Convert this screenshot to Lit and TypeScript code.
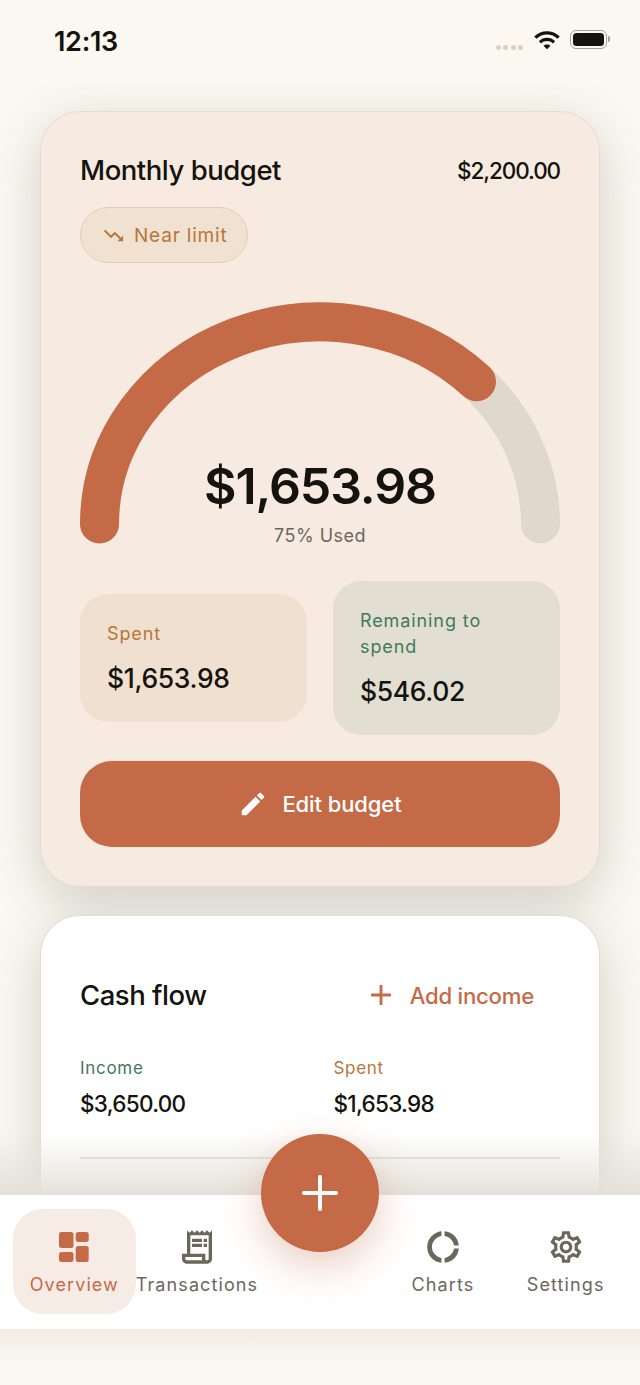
import { LitElement, html, css, svg } from "lit";
import { customElement } from "lit/decorators.js";

const icon = (d: string, size: number, cls = "") => html`<svg class=${cls} width=${size} height=${size} viewBox="0 0 24 24" fill="currentColor">${svg`<path d=${d}></path>`}</svg>`;

const I = {
  wifi: "M1 9l2 2c4.97-4.97 13.03-4.97 18 0l2-2C16.93 2.93 7.08 2.93 1 9zm8 8l3 3 3-3c-1.65-1.66-4.34-1.66-6 0zm-4-4l2 2c2.76-2.76 7.24-2.76 10 0l2-2C15.14 9.14 8.87 9.14 5 13z",
  trend: "M16 18l2.29-2.29-4.88-4.88-4 4L2 7.41 3.41 6l6 6 4-4 6.3 6.29L22 12v6z",
  edit: "M3 17.25V21h3.75L17.81 9.94l-3.75-3.75L3 17.25zM20.71 7.04c.39-.39.39-1.02 0-1.41l-2.34-2.34c-.39-.39-1.02-.39-1.41 0l-1.83 1.83 3.75 3.75 1.83-1.83z",
  receipt: "M19.5 3.5 18 2l-1.5 1.5L15 2l-1.5 1.5L12 2l-1.5 1.5L9 2 7.5 3.5 6 2v14H3v3c0 1.66 1.34 3 3 3h12c1.66 0 3-1.34 3-3V2l-1.5 1.5zM15 20H6c-.55 0-1-.45-1-1v-1h10v2zm4-1c0 .55-.45 1-1 1s-1-.45-1-1v-3H8V5h11v14zM9 7h6v2H9zM16 7h2v2h-2zM9 10h6v2H9zM16 10h2v2h-2z",
  donut: "M11 5.08V2c-5 .5-9 4.81-9 10s4 9.5 9 10v-3.08c-3-.48-6-3.4-6-6.92s3-6.44 6-6.92zM18.97 11H22c-.47-5-4-8.53-9-9v3.08C16 5.51 18.54 8 18.97 11zM13 18.92V22c5-.47 8.53-4 9-9h-3.03c-.43 3-2.97 5.49-5.97 5.92z",
  gear: "M19.43 12.98c.04-.32.07-.64.07-.98 0-.34-.03-.66-.07-.98l2.11-1.65c.19-.15.24-.42.12-.64l-2-3.46c-.09-.16-.26-.25-.44-.25-.06 0-.12.01-.17.03l-2.49 1c-.52-.4-1.08-.73-1.69-.98l-.38-2.65C14.46 2.18 14.25 2 14 2h-4c-.25 0-.46.18-.49.42l-.38 2.65c-.61.25-1.17.59-1.69.98l-2.49-1c-.06-.02-.12-.03-.18-.03-.17 0-.34.09-.43.25l-2 3.46c-.13.22-.07.49.12.64l2.11 1.65c-.04.32-.07.65-.07.98 0 .33.03.66.07.98l-2.11 1.65c-.19.15-.24.42-.12.64l2 3.46c.09.16.26.25.44.25.06 0 .12-.01.17-.03l2.49-1c.52.4 1.08.73 1.69.98l.38 2.65c.03.24.24.42.49.42h4c.25 0 .46-.18.49-.42l.38-2.65c.61-.25 1.17-.59 1.69-.98l2.49 1c.06.02.12.03.18.03.17 0 .34-.09.43-.25l2-3.46c.12-.22.07-.49-.12-.64l-2.11-1.65zm-1.98-1.71c.04.31.05.52.05.73 0 .21-.02.43-.05.73l-.14 1.13.89.7 1.08.84-.7 1.21-1.27-.51-1.04-.42-.9.68c-.43.32-.84.56-1.25.73l-1.06.43-.16 1.13-.2 1.35h-1.4l-.19-1.35-.16-1.13-1.06-.43c-.43-.18-.83-.41-1.23-.71l-.91-.7-1.06.43-1.27.51-.7-1.21 1.08-.84.89-.7-.14-1.13c-.03-.31-.05-.54-.05-.74s.02-.43.05-.73l.14-1.13-.89-.7-1.08-.84.7-1.21 1.27.51 1.04.42.9-.68c.43-.32.84-.56 1.25-.73l1.06-.43.16-1.13.2-1.35h1.39l.19 1.35.16 1.13 1.06.43c.43.18.83.41 1.23.71l.91.7 1.06-.43 1.27-.51.7 1.21-1.07.85-.89.7.14 1.13zM12 8c-2.21 0-4 1.79-4 4s1.79 4 4 4 4-1.79 4-4-1.79-4-4-4zm0 6c-1.1 0-2-.9-2-2s.9-2 2-2 2 .9 2 2-.9 2-2 2z",
};

@customElement("app-root")
export class AppRoot extends LitElement {
  static styles = css`
    :host { display: block; width: 640px; height: 1385px; overflow: hidden; background: #fbf8f1; color: #14130e; font-family: "Inter", "Liberation Sans", sans-serif; }
    * { box-sizing: border-box; }
    .screen { position: relative; height: 1385px; display: flex; flex-direction: column; }
    .status { height: 83px; flex: none; display: flex; justify-content: space-between; align-items: center; padding: 0 33px 4px 54px; }
    .time { font-size: 27px; font-weight: 600; letter-spacing: -.3px; padding-top: 3px; }
    .sys { display: flex; align-items: center; }
    .dots { display: flex; gap: 2.5px; margin: 15px 10px 0 0; }
    .dots i { width: 5px; height: 5px; border-radius: 50%; background: #e0cfc0; }
    .wifi { color: #14130e; margin-right: 9px; }
    .batt { width: 37px; height: 19px; border: 1.5px solid #a8a294; border-radius: 6px; padding: 2px; position: relative; }
    .batt b { display: block; height: 100%; background: #14130e; border-radius: 3.5px; }
    .batt::after { content: ""; position: absolute; right: -4px; top: 5px; width: 2px; height: 6px; background: #a8a294; border-radius: 0 2px 2px 0; }
    .scroll { flex: 1; min-height: 0; position: relative; overflow: hidden; padding: 28px 40px 0; display: flex; flex-direction: column; gap: 28px; }
    .card { flex: none; border-radius: 40px; border: 1.5px solid #e6ddd0; box-shadow: 0 14px 50px rgba(70,70,50,.22); padding: 39px; }
    .budget { background: #f7ebe1; height: 776px; display: flex; flex-direction: column; }
    .head { display: flex; justify-content: space-between; align-items: center; height: 38px; }
    h2 { margin: 0; font-size: 27.5px; font-weight: 500; line-height: 38px; letter-spacing: -.47px; }
    .limit { font-size: 22.5px; font-weight: 500; letter-spacing: -1.1px; }
    .badge { align-self: flex-start; display: flex; align-items: center; gap: 9px; height: 56px; margin-top: 18px; padding: 1px 20px 0 21px; border-radius: 28px; background: #f0e1d0; border: 1.5px solid #e0cfbb; color: #b8763a; font-size: 19px; letter-spacing: .8px; }
    .gauge { position: relative; height: 242px; margin-top: 39px; }
    .gauge svg { display: block; }
    .center { position: absolute; left: 0; right: 0; bottom: -5px; display: flex; flex-direction: column; align-items: center; }
    .amount { font-size: 50px; font-weight: 600; line-height: 60px; letter-spacing: -1.1px; }
    .used { font-size: 18px; letter-spacing: .5px; color: #6c675b; line-height: 26px; margin-top: 7px; }
    .tiles { display: flex; align-items: center; gap: 26px; margin-top: 37px; }
    .tile { flex: 1; border-radius: 28px; padding: 27px 27px 25px; }
    .tile.a { background: #f0e0cf; color: #b8763a; }
    .tile.b { background: #e2dfd2; color: #3f7a5c; }
    .tile span { display: block; font-size: 18px; line-height: 26px; letter-spacing: .9px; }
    .tile strong { display: block; font-size: 26.5px; font-weight: 500; color: #14130e; line-height: 38px; margin-top: 12px; letter-spacing: -.35px; }
    .btn { display: flex; align-items: center; justify-content: center; gap: 14px; height: 86px; margin-top: 26px; border-radius: 32px; background: #c56a47; color: #fff; font-size: 22px; font-weight: 500; letter-spacing: -.1px; }
    .cash { background: #fff; height: 400px; padding-top: 0; }
    .cash .row { display: flex; justify-content: space-between; align-items: center; height: 158px; }
    .add { display: flex; align-items: center; gap: 12px; color: #c56a47; font-size: 22.2px; font-weight: 500; letter-spacing: -.25px; margin-right: 26px; }
    .cols { display: grid; grid-template-columns: 253.5px 1fr; margin-top: -18px; }
    .cols span { display: block; font-size: 17px; line-height: 24px; letter-spacing: .7px; }
    .cols .g { color: #3f7a5c; }
    .cols .o { color: #b8763a; }
    .cols strong { display: block; font-size: 22.5px; font-weight: 500; line-height: 32px; margin-top: 8px; letter-spacing: -.7px; }
    hr { border: 0; height: 1.5px; background: #e6ddd0; margin: 37px 0 0; }
    .fade { position: absolute; left: 0; right: 0; bottom: 0; height: 62px; background: linear-gradient(to bottom, rgba(226,224,216,0), rgba(226,224,216,.95)); pointer-events: none; }
    nav { flex: none; height: 134px; background: #fff; display: flex; padding: 14px 13px 15px; }
    .item { width: 122.8px; display: flex; flex-direction: column; align-items: center; justify-content: center; gap: 8px; border-radius: 30px; color: #6c675b; font-size: 18px; letter-spacing: 1.1px; }
    .item svg { display: block; }
    .item.on { background: #f6ece5; color: #c56a47; }
    .slot { width: 123.5px; }
    .rc { margin: -1px; }
    .safe { flex: none; height: 56px; background: linear-gradient(to bottom, #f1ede3, #fbf8f1 60%); }
    .fab { position: absolute; left: 261px; top: 1134px; width: 118px; height: 118px; border-radius: 50%; background: #c56a47; color: #fff; display: flex; align-items: center; justify-content: center; box-shadow: 0 14px 40px rgba(196,107,72,.34); }
  `;

  render() {
    return html`<div class="screen">
      <div class="status">
        <span class="time">12:13</span>
        <div class="sys">
          <div class="dots"><i></i><i></i><i></i><i></i></div>
          ${icon(I.wifi, 28, "wifi")}
          <div class="batt"><b></b></div>
        </div>
      </div>
      <div class="scroll">
        <section class="card budget">
          <div class="head"><h2>Monthly budget</h2><span class="limit">$2,200.00</span></div>
          <div class="badge">${icon(I.trend, 23)}<span>Near limit</span></div>
          <div class="gauge">
            <svg width="480" height="242" viewBox="80 302 480 242" fill="none" stroke-width="39" stroke-linecap="round">
              <path d="M99.5 524A220.5 202 0 0 1 540.5 524" stroke="#e0d8cd"></path>
              <path d="M99.5 524A220.5 202 0 0 1 476.5 381.7" stroke="#c56a47"></path>
            </svg>
            <div class="center"><div class="amount">$1,653.98</div><div class="used">75% Used</div></div>
          </div>
          <div class="tiles">
            <div class="tile a"><span>Spent</span><strong>$1,653.98</strong></div>
            <div class="tile b"><span>Remaining to spend</span><strong>$546.02</strong></div>
          </div>
          <div class="btn">${icon(I.edit, 30)}<span>Edit budget</span></div>
        </section>
        <section class="card cash">
          <div class="row"><h2>Cash flow</h2><div class="add">${icon("M19 13h-6v6h-2v-6H5v-2h6V5h2v6h6v2z", 34)}<span>Add income</span></div></div>
          <div class="cols">
            <div><span class="g">Income</span><strong>$3,650.00</strong></div>
            <div><span class="o">Spent</span><strong>$1,653.98</strong></div>
          </div>
          <hr />
        </section>
        <div class="fade"></div>
      </div>
      <nav>
        <div class="item on">
          <svg width="38" height="38" viewBox="0 0 38 38" fill="currentColor"><rect x="4" y="4" width="14.5" height="16" rx="2.5"></rect><rect x="20.7" y="4" width="13" height="10" rx="2.5"></rect><rect x="4" y="24" width="14.5" height="10" rx="2.5"></rect><rect x="20.7" y="18" width="13" height="16" rx="2.5"></rect></svg>
          <span>Overview</span>
        </div>
        <div class="item">${icon(I.receipt, 40, "rc")}<span>Transactions</span></div>
        <div class="slot"></div>
        <div class="item">${icon(I.donut, 38)}<span>Charts</span></div>
        <div class="item">${icon(I.gear, 38)}<span>Settings</span></div>
      </nav>
      <div class="safe"></div>
      <div class="fab"><svg width="48" height="48" viewBox="0 0 48 48" stroke="currentColor" stroke-width="4" stroke-linecap="round"><path d="M24 8V40M8 24H40"></path></svg></div>
    </div>`;
  }
}
